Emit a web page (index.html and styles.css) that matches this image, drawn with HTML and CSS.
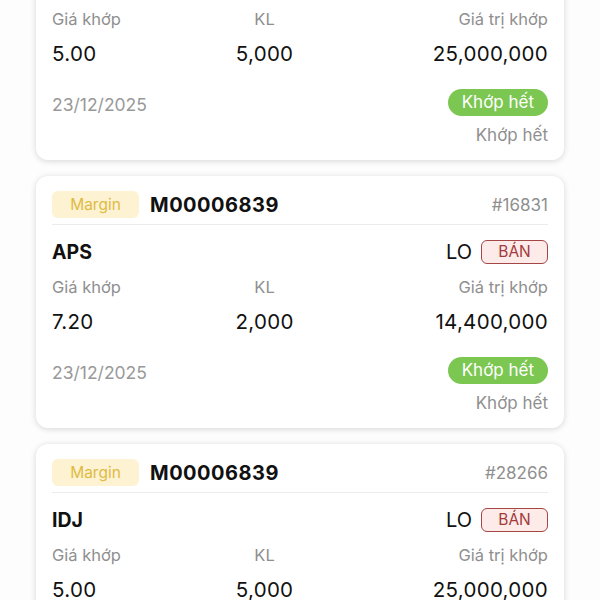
FILE: index.html
```html
<!DOCTYPE html>
<html lang="vi">
<head>
  <meta charset="UTF-8">
  <meta name="viewport" content="width=device-width, initial-scale=1.0">
  <title>Sổ lệnh</title>
  <link rel="stylesheet" href="styles.css">
</head>
<body>
  <div class="list">

    <div class="card">
      <div class="head">
        <span class="tag">Margin</span>
        <span class="acc">M00006839</span>
        <span class="no">#10012</span>
      </div>
      <div class="sym-row">
        <span class="sym">IDJ</span>
        <span class="type">LO</span>
        <span class="side">BÁN</span>
      </div>
      <div class="grid">
        <span class="lbl">Giá khớp</span>
        <span class="lbl mid">KL</span>
        <span class="lbl end">Giá trị khớp</span>
        <span class="val">5.00</span>
        <span class="val mid">5,000</span>
        <span class="val end">25,000,000</span>
      </div>
      <div class="foot">
        <span class="date">23/12/2025</span>
        <span class="pill">Khớp hết</span>
      </div>
      <div class="state">Khớp hết</div>
    </div>

    <div class="card">
      <div class="head">
        <span class="tag">Margin</span>
        <span class="acc">M00006839</span>
        <span class="no">#16831</span>
      </div>
      <div class="sym-row">
        <span class="sym">APS</span>
        <span class="type">LO</span>
        <span class="side">BÁN</span>
      </div>
      <div class="grid">
        <span class="lbl">Giá khớp</span>
        <span class="lbl mid">KL</span>
        <span class="lbl end">Giá trị khớp</span>
        <span class="val">7.20</span>
        <span class="val mid">2,000</span>
        <span class="val end">14,400,000</span>
      </div>
      <div class="foot">
        <span class="date">23/12/2025</span>
        <span class="pill">Khớp hết</span>
      </div>
      <div class="state">Khớp hết</div>
    </div>

    <div class="card">
      <div class="head">
        <span class="tag">Margin</span>
        <span class="acc">M00006839</span>
        <span class="no">#28266</span>
      </div>
      <div class="sym-row">
        <span class="sym">IDJ</span>
        <span class="type">LO</span>
        <span class="side">BÁN</span>
      </div>
      <div class="grid">
        <span class="lbl">Giá khớp</span>
        <span class="lbl mid">KL</span>
        <span class="lbl end">Giá trị khớp</span>
        <span class="val">5.00</span>
        <span class="val mid">5,000</span>
        <span class="val end">25,000,000</span>
      </div>
      <div class="foot">
        <span class="date">23/12/2025</span>
        <span class="pill">Khớp hết</span>
      </div>
      <div class="state">Khớp hết</div>
    </div>

  </div>
</body>
</html>
```

FILE: styles.css
```css
body { margin: 0; background: #fdfdfd; color: #111; font-family: Inter, "Noto Sans", sans-serif; overflow: hidden; }
.list { display: flex; flex-direction: column; gap: 16px; padding: 0 36px; margin-top: -92px; }
.card { background: #fff; border-radius: 12px; padding: 15px 16px 14px; box-shadow: 0 1px 6px rgba(0,0,0,0.16); }

.head { display: flex; align-items: center; height: 27px; padding-bottom: 6px; border-bottom: 1px solid #ececec; }
.tag { background: #fdf2d2; color: #dfbb45; font-size: 15.5px; border-radius: 6px; width: 87px; height: 27px; line-height: 27px; text-align: center; }
.acc { font-size: 20px; font-weight: 700; margin-left: 11px; letter-spacing: 0.5px; }
.no { margin-left: auto; color: #8f8f8f; font-size: 17px; }

.sym-row { display: flex; align-items: center; margin-top: 14px; height: 26px; }
.sym { font-size: 19.5px; font-weight: 700; }
.type { margin-left: auto; font-size: 20px; }
.side { margin-left: 9px; width: 65px; height: 22px; line-height: 22px; text-align: center; border: 1px solid #a54646; border-radius: 6px; background: #fdebea; color: #a33a3a; font-size: 15.5px; }

.grid { display: grid; grid-template-columns: 2fr 2fr 3fr; row-gap: 12px; margin-top: 11px; }
.lbl { color: #8f8f8f; font-size: 16.5px; line-height: 22px; }
.val { font-size: 20.5px; line-height: 24px; letter-spacing: 0.3px; }
.mid { text-align: center; }
.end { text-align: right; }

.foot { display: flex; align-items: flex-end; justify-content: space-between; height: 27px; margin-top: 23px; }
.date { color: #999; font-size: 17.5px; line-height: 22px; }
.pill { background: #7cc652; color: #fff; font-size: 17px; height: 27px; line-height: 27px; padding: 0 14px; border-radius: 14px; }
.state { text-align: right; color: #8f8f8f; font-size: 17px; margin-top: 8px; line-height: 22px; }
```
